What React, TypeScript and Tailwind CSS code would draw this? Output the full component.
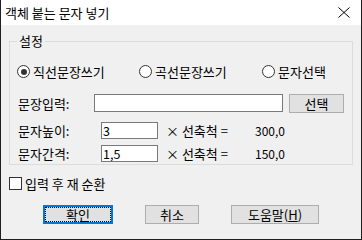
import React from "react";

function Radio({ checked, label, width }: { checked?: boolean; label: string; width?: string }) {
  return (
    <div className={`flex items-center gap-[3px] ${width ?? ""}`}>
      <div className="w-[13px] h-[13px] shrink-0 rounded-full border border-[#333333] bg-white flex items-center justify-center">
        {checked && <div className="w-[6px] h-[6px] rounded-full bg-[#333333]" />}
      </div>
      <span>{label}</span>
    </div>
  );
}

export default function App() {
  return (
    <div className="w-[362px] h-[240px] bg-[#f0f0f0] border-x border-b border-[#1f1f1f] flex flex-col text-[13px] leading-[15px] text-black font-['Noto_Sans_CJK_KR','Noto_Sans',sans-serif]">
      <div className="h-[25px] shrink-0 bg-white flex items-center justify-between pl-[4px] pr-[11px]">
        <span className="leading-[16px]">객체 붙는 문자 넣기</span>
        <svg width="12" height="11" viewBox="0 0 12 11" className="block">
          <path d="M0.5 0.5 L11.5 10.5 M11.5 0.5 L0.5 10.5" stroke="#000" strokeWidth="1" fill="none" />
        </svg>
      </div>

      <div className="relative ml-[8px] mt-[16px] w-[344px] h-[124px] shrink-0 border border-[#dcdcdc] flex flex-col">
        <span className="absolute left-[7px] top-[-9px] px-[2px] bg-[#f0f0f0] leading-[16px]">설정</span>

        <div className="mt-[23px] h-[13px] flex items-center pl-[7px]">
          <Radio checked label="직선문장쓰기" width="w-[122px]" />
          <Radio label="곡선문장쓰기" width="w-[123px]" />
          <Radio label="문자선택" />
        </div>

        <div className="mt-[15px] h-[20px] flex items-center pl-[8px]">
          <span className="w-[76px]">문장입력:</span>
          <div className="w-[189px] h-[18px] border border-[#7a7a7a] bg-white" />
          <div className="ml-[6px] w-[55px] h-[19px] border border-[#adadad] bg-[#e1e1e1] flex items-center justify-center">
            선택
          </div>
        </div>

        <div className="mt-[9px] h-[17px] flex items-center pl-[8px]">
          <span className="w-[83px]">문자높이:</span>
          <div className="w-[57px] h-[17px] border border-[#7a7a7a] bg-white flex items-center pl-[1px] text-[12.5px]">3</div>
          <span className="ml-[8px] w-[89px]">× 선축척 =</span>
          <span className="text-[12px]">300,0</span>
        </div>

        <div className="mt-[6px] h-[17px] flex items-center pl-[8px]">
          <span className="w-[83px]">문자간격:</span>
          <div className="w-[57px] h-[17px] border border-[#7a7a7a] bg-white flex items-center pl-[1px] text-[12.5px]">1,5</div>
          <span className="ml-[8px] w-[89px]">× 선축척 =</span>
          <span className="text-[12px]">150,0</span>
        </div>
      </div>

      <div className="mt-[12px] ml-[8px] h-[13px] flex items-center gap-[3px]">
        <div className="w-[13px] h-[13px] shrink-0 border border-[#333333] bg-white" />
        <span>입력 후 재 순환</span>
      </div>

      <div className="mt-[15px] flex pl-[42px]">
        <div className="w-[70px] h-[19px] border-2 border-[#0078d7] bg-[#e1e1e1]">
          <div className="w-full h-full border border-dotted border-black flex items-center justify-center">확인</div>
        </div>
        <div className="ml-[32px] w-[54px] h-[19px] border border-[#adadad] bg-[#e1e1e1] flex items-center justify-center">
          취소
        </div>
        <div className="ml-[32px] w-[88px] h-[19px] border border-[#adadad] bg-[#e1e1e1] flex items-center justify-center">
          도움말(<span className="underline">H</span>)
        </div>
      </div>
    </div>
  );
}
